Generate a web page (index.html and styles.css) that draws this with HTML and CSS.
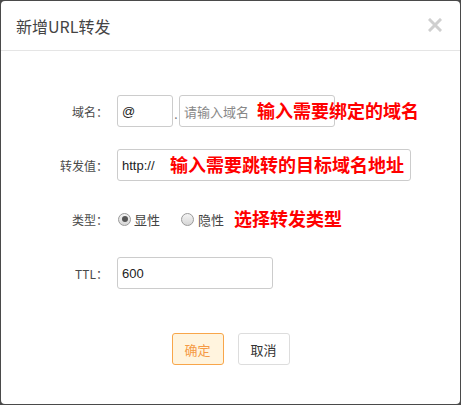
FILE: index.html
```html
<!DOCTYPE html>
<html lang="zh">
<head>
<meta charset="utf-8">
<link rel="stylesheet" href="styles.css">
</head>
<body>
<div class="dialog">
  <div class="header">
    <span class="title">新增URL转发</span>
    <span class="close">
      <svg width="14" height="14" viewBox="0 0 14 14"><path d="M2 2 L12 12 M12 2 L2 12" stroke="#cfcfcf" stroke-width="3" stroke-linecap="square"/></svg>
    </span>
  </div>
  <div class="body">
    <div class="row">
      <label class="label">域名：</label>
      <div class="field">
        <div class="input w56"><span class="val">@</span></div>
        <span class="dot">.</span>
        <div class="input w156"><span class="ph">请输入域名</span></div>
        <span class="note note1">输入需要绑定的域名</span>
      </div>
    </div>
    <div class="row">
      <label class="label">转发值：</label>
      <div class="field">
        <div class="input w294"><span class="val">http://</span></div>
        <span class="note note2">输入需要跳转的目标域名地址</span>
      </div>
    </div>
    <div class="row">
      <label class="label">类型：</label>
      <div class="field">
        <span class="radio checked"></span><span class="rtext">显性</span>
        <span class="radio second"></span><span class="rtext">隐性</span>
        <span class="note3">选择转发类型</span>
      </div>
    </div>
    <div class="row">
      <label class="label">TTL：</label>
      <div class="field">
        <div class="input w156"><span class="val">600</span></div>
      </div>
    </div>
    <div class="buttons">
      <button class="btn ok">确定</button>
      <button class="btn cancel">取消</button>
    </div>
  </div>
</div>
</body>
</html>
```
FILE: styles.css
```css
html, body {
  margin: 0;
  padding: 0;
}
body {
  background: #4a4a4a;
  width: 461px;
  height: 405px;
  overflow: hidden;
  font-family: "Noto Sans CJK SC", "Liberation Sans", sans-serif;
}
.dialog {
  margin: 1px 1px 0 1px;
  background: #fff;
  border-radius: 4px;
  height: 403px;
}
.header {
  height: 49px;
  border-bottom: 1px solid #e5e5e5;
  display: flex;
  align-items: center;
  justify-content: space-between;
  padding: 0 16px 0 15px;
}
.title {
  font-size: 16px;
  color: #444;
  margin-top: 1px;
}
.close {
  display: flex;
  margin-top: -2px;
  margin-right: 2px;
}
.body {
  padding-top: 44px;
}
.row {
  display: flex;
  align-items: center;
  height: 32px;
  margin-bottom: 22px;
}
.label {
  width: 107px;
  text-align: right;
  font-size: 12px;
  color: #4a4a4a;
  margin-right: 9px;
}
.field {
  position: relative;
  display: flex;
  align-items: center;
  height: 32px;
}
.input {
  box-sizing: border-box;
  height: 32px;
  border: 1px solid #ccc;
  border-radius: 3px;
  display: flex;
  align-items: center;
  padding-left: 4px;
  font-size: 13px;
  font-family: "Liberation Sans", "Noto Sans CJK SC", sans-serif;
}
.w56 { width: 56px; }
.w156 { width: 156px; }
.w294 { width: 294px; }
.val { color: #222; }
.ph {
  color: #888;
  font-family: "Noto Sans CJK SC", sans-serif;
  font-size: 13px;
}
.dot {
  width: 6px;
  text-align: center;
  font-size: 12px;
  color: #777;
  margin-top: 4px;
}
.note {
  position: absolute;
  top: 50%;
  transform: translateY(-52%);
  color: #f00;
  font-weight: bold;
  font-size: 18px;
  white-space: nowrap;
}
.note1 { left: 140px; }
.note2 { left: 53px; }
.note3 {
  color: #f00;
  font-weight: bold;
  font-size: 18px;
  margin-left: 10px;
  margin-top: -2px;
}
.radio {
  box-sizing: border-box;
  width: 13px;
  height: 13px;
  border-radius: 50%;
  border: 1px solid #9a9a9a;
  background: linear-gradient(#f4f4f4, #d6d6d6);
  position: relative;
  margin-left: 1px;
  margin-right: 3px;
}
.radio.checked::after {
  content: "";
  position: absolute;
  left: 2.5px;
  top: 2.5px;
  width: 6px;
  height: 6px;
  border-radius: 50%;
  background: #555;
}
.radio.second { margin-left: 21px; margin-right: 4px; }
.rtext {
  font-size: 13px;
  color: #444;
}
.buttons {
  display: flex;
  justify-content: center;
  gap: 14px;
  padding-top: 22px;
  padding-left: 0;
}
.btn {
  box-sizing: border-box;
  width: 52px;
  height: 32px;
  border-radius: 3px;
  font-size: 13px;
  font-family: "Noto Sans CJK SC", sans-serif;
  padding: 0;
  cursor: pointer;
}
.ok {
  background: #fff4de;
  border: 1px solid #f8a64a;
  color: #f59a45;
}
.cancel {
  background: #fff;
  border: 1px solid #ddd;
  color: #333;
}
```
